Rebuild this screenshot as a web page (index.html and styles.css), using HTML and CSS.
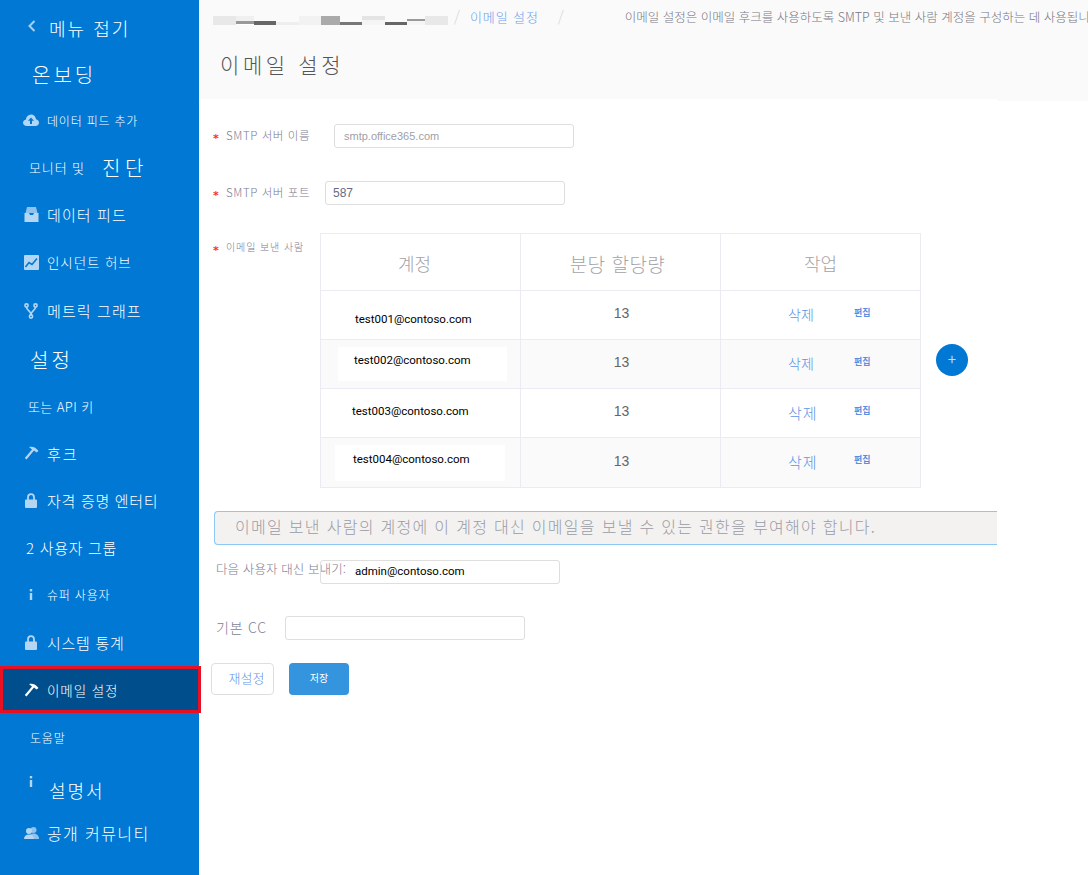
FILE: index.html
```html
<!DOCTYPE html>
<html lang="ko">
<head>
	<meta charset="UTF-8">
	<title>이메일 설정</title>
	<link rel="stylesheet" href="styles.css">
</head>
<body>
	<div class="page">
		<div class="side">
			<div class="item h46 fold">
				<svg class="chev" width="8" height="12" viewBox="0 0 8 12"><path d="M6.5 1 L1.5 6 L6.5 11" fill="none" stroke="#a9d0f2" stroke-width="2"/></svg>
				<span class="fs18">메뉴 접기</span>
			</div>
			<div class="item h46 pl32"><span class="fs20">온보딩</span></div>
			<div class="item h46">
				<span class="ic"><svg width="16" height="12" viewBox="0 0 16 12"><path d="M4 12 C1.5 12 0 10.6 0 8.8 C0 7.2 1.2 6 2.8 5.8 C3.2 2.6 5.4 0.5 8 0.5 C10.6 0.5 12.6 2.4 13 5.2 C14.8 5.5 16 6.9 16 8.7 C16 10.6 14.5 12 12.5 12 Z" fill="#b5d6f3"/><path d="M8 3.5 L11 6.8 H9 V10 H7 V6.8 H5 Z" fill="#0078d4"/></svg></span>
				<span class="fs12">데이터 피드 추가</span>
			</div>
			<div class="item h48 pl29"><span class="fs13 gap-r">모니터 및</span><span class="fs20 wide">진단</span></div>
			<div class="item h47">
				<span class="ic"><svg width="15" height="15" viewBox="0 0 15 15"><path d="M3 0 H12 L13.5 6 H1.5 Z" fill="#8fc2ee"/><path d="M0.5 6 H5 L6 8 H9 L10 6 H14.5 V15 H0.5 Z" fill="#b5d6f3"/></svg></span>
				<span class="fs15">데이터 피드</span>
			</div>
			<div class="item h48">
				<span class="ic"><svg width="15" height="15" viewBox="0 0 15 15"><rect width="15" height="15" rx="1" fill="#b5d6f3"/><path d="M1.5 12 L5 7.5 L8 9.5 L13 3.5" fill="none" stroke="#0078d4" stroke-width="1.6"/></svg></span>
				<span class="fs14">인시던트 허브</span>
			</div>
			<div class="item h49">
				<span class="ic"><svg width="14" height="16" viewBox="0 0 14 16"><g fill="none" stroke="#b5d6f3" stroke-width="1.6"><circle cx="2.5" cy="2.5" r="1.6"/><circle cx="11.5" cy="2.5" r="1.6"/><circle cx="7" cy="13.5" r="1.6"/><path d="M2.5 4 C2.5 8 7 7.5 7 12 M11.5 4 C11.5 8 7 7.5 7 12"/></g></svg></span>
				<span class="fs15">메트릭 그래프</span>
			</div>
			<div class="item h48 pl30"><span class="fs20">설정</span></div>
			<div class="item h46 pl28"><span class="fs13 tight">또는 API 키</span></div>
			<div class="item h48">
				<span class="ic"><svg width="15" height="14" viewBox="0 0 15 14"><path d="M5 1 C8 0 12 1 14.5 5 L12.5 6.5 L10 4.5 L2.5 13.5 L0.8 12 L8 3.5 C7 2.5 6 2 5 1 Z" fill="#b5d6f3"/></svg></span>
				<span class="fs15 short">후크</span>
			</div>
			<div class="item h47">
				<span class="ic"><svg width="12" height="15" viewBox="0 0 12 15"><path d="M3 7 V4.5 C3 2.5 4.3 1.2 6 1.2 C7.7 1.2 9 2.5 9 4.5 V7" fill="none" stroke="#b5d6f3" stroke-width="1.8"/><rect y="6.5" width="12" height="8.5" rx="1" fill="#b5d6f3"/></svg></span>
				<span class="fs15 snug">자격 증명 엔터티</span>
			</div>
			<div class="item h47 pl26"><span class="fs15 snug">2 사용자 그룹</span></div>
			<div class="item h47">
				<span class="ic"><svg width="4" height="11" viewBox="0 0 4 11"><rect x="0.8" width="2.4" height="2.4" fill="#b5d6f3"/><rect x="0.8" y="4" width="2.4" height="7" fill="#b5d6f3"/></svg></span>
				<span class="fs12">슈퍼 사용자</span>
			</div>
			<div class="item h48">
				<span class="ic"><svg width="12" height="15" viewBox="0 0 12 15"><path d="M3 7 V4.5 C3 2.5 4.3 1.2 6 1.2 C7.7 1.2 9 2.5 9 4.5 V7" fill="none" stroke="#b5d6f3" stroke-width="1.8"/><rect y="6.5" width="12" height="8.5" rx="1" fill="#b5d6f3"/></svg></span>
				<span class="fs15 snug">시스템 통계</span>
			</div>
			<div class="item h47 active">
				<span class="ic"><svg width="15" height="14" viewBox="0 0 15 14"><path d="M5 1 C8 0 12 1 14.5 5 L12.5 6.5 L10 4.5 L2.5 13.5 L0.8 12 L8 3.5 C7 2.5 6 2 5 1 Z" fill="#fff"/></svg></span>
				<span class="fs14">이메일 설정</span>
			</div>
			<div class="item h49 pl30"><span class="fs12">도움말</span></div>
			<div class="item h49">
				<span class="ic"><svg class="up" width="4" height="11" viewBox="0 0 4 11"><rect x="0.8" width="2.4" height="2.4" fill="#b5d6f3"/><rect x="0.8" y="4" width="2.4" height="7" fill="#b5d6f3"/></svg></span>
				<span class="fs18 doc">설명서</span>
			</div>
			<div class="item h44">
				<span class="ic"><svg width="15" height="12" viewBox="0 0 15 12"><circle cx="9.5" cy="3" r="3" fill="#8fc2ee"/><path d="M5 12 C5 8 7 6.5 9.5 6.5 C12 6.5 15 8 15 12 Z" fill="#8fc2ee"/><circle cx="5" cy="4" r="3" fill="#b5d6f3"/><path d="M0 12 C0 9 2 7.5 5 7.5 C8 7.5 10 9 10 12 Z" fill="#b5d6f3"/></svg></span>
				<span class="fs16">공개 커뮤니티</span>
			</div>
		</div>

		<div class="main">
			<div class="head">
				<div class="crumbs">
					<div class="blur">
						<i class="b1"></i><i class="b2"></i><i class="b3"></i><i class="b4"></i><i class="b5"></i><i class="b6"></i><i class="b7"></i><i class="b8"></i><i class="b9"></i><i class="b10"></i><i class="b11"></i>
					</div>
					<span class="slash">/</span>
					<span class="crumb-link">이메일 설정</span>
					<span class="slash slash2">/</span>
					<span class="crumb-desc">이메일 설정은 이메일 후크를 사용하도록 SMTP 및 보낸 사람 계정을 구성하는 데 사용됩니다.</span>
				</div>
				<div class="title">이메일 설정</div>
			</div>
			<div class="notch"></div>

			<div class="form">
				<div class="row">
					<span class="star">*</span>
					<label class="lab">SMTP 서버 이름</label>
					<div class="inp host">smtp.office365.com</div>
				</div>
				<div class="row row-port">
					<span class="star">*</span>
					<label class="lab lab-port">SMTP 서버 포트</label>
					<div class="inp port">587</div>
				</div>
				<div class="row row-table">
					<span class="star star-t">*</span>
					<label class="lab lab-t">이메일 보낸 사람</label>
					<table class="tbl">
						<tr>
							<th class="th1">계정</th>
							<th class="th2">분당 할당량</th>
							<th>작업</th>
						</tr>
						<tr class="r1">
							<td><span class="mail m1">test001@contoso.com</span></td>
							<td class="num">13</td>
							<td><div class="acts"><a class="del">삭제</a><a class="edit">편집</a></div></td>
						</tr>
						<tr class="r2">
							<td><span class="mail m2">test002@contoso.com</span></td>
							<td class="num">13</td>
							<td><div class="acts"><a class="del">삭제</a><a class="edit">편집</a></div></td>
						</tr>
						<tr class="r3">
							<td><span class="mail m3">test003@contoso.com</span></td>
							<td class="num">13</td>
							<td><div class="acts"><a class="del">삭제</a><a class="edit">편집</a></div></td>
						</tr>
						<tr class="r4">
							<td><span class="mail m4">test004@contoso.com</span></td>
							<td class="num">13</td>
							<td><div class="acts"><a class="del">삭제</a><a class="edit">편집</a></div></td>
						</tr>
					</table>
					<div class="add">+</div>
				</div>
				<div class="alert">이메일 보낸 사람의 계정에 이 계정 대신 이메일을 보낼 수 있는 권한을 부여해야 합니다.</div>
				<div class="row row-from">
					<label class="lab2 lab-from">다음 사용자 대신 보내기:</label>
					<div class="inp from">admin@contoso.com</div>
				</div>
				<div class="row row-cc">
					<label class="lab2 lab-cc">기본 CC</label>
					<div class="inp"></div>
				</div>
				<div class="btns">
					<button class="btn reset">재설정</button>
					<button class="btn save">저장</button>
				</div>
			</div>
		</div>
	</div>
</body>
</html>
```
FILE: styles.css
```css
* { margin:0;padding:0;box-sizing:border-box; }
html,body { height:875px;overflow:hidden;background:#fff; }
body { font-family:"Noto Sans CJK KR","Noto Sans",sans-serif;font-weight:300; }
.page { display:flex;height:875px; }

/* left menu */
.side { width:199px;flex:none;background:#0078d4;color:#fff;padding-top:5px;position:relative; }
.item { display:flex;align-items:center;padding-left:23px;white-space:nowrap; }
.h44 { height:44px; } .h46 { height:46px; } .h47 { height:47px; } .h48 { height:48px; } .h49 { height:49px; }
.pl26 { padding-left:26px; } .pl28 { padding-left:28px; } .pl29 { padding-left:29px; } .pl30 { padding-left:30px; } .pl32 { padding-left:32px; }
.fs12 { font-size:12px;letter-spacing:.8px; }
.fs13 { font-size:13px;letter-spacing:.9px; }
.fs14 { font-size:13.5px;letter-spacing:.9px; }
.fs15 { font-size:15px;letter-spacing:1.1px; }
.fs16 { font-size:16px;letter-spacing:1.4px; }
.fs18 { font-size:18px;letter-spacing:2px; }
.fs20 { font-size:20px;letter-spacing:3px; }
.tight { letter-spacing:.4px; }
.snug { letter-spacing:.7px; }
.short { letter-spacing:2px; }
.ic { width:16px;margin-right:8px;flex:none;display:flex;justify-content:center; }
.up { margin-bottom:10px; }
.fold { padding-left:28px; }
.chev { margin-right:13px;margin-top:-4px; }
.gap-r { margin-right:17px; }
.wide { letter-spacing:4.5px; }
.doc { margin:6px 0 0 2px; }
.active { background:#004e8c;border:3px solid #e81123;width:201px;padding-left:20px;position:relative; }

/* header */
.main { flex:1;min-width:0; }
.head { height:99px;background:#fafafa;overflow:hidden; }
.notch { width:91px;height:2px;background:#fafafa;margin-left:auto; }
.crumbs { display:flex;align-items:center;height:18px;margin-top:7px;padding-left:14px;white-space:nowrap;font-size:13px; }
.blur { display:flex;height:9px;width:235px;margin-top:9px;flex:none; }
.blur i { display:block;height:9px;flex:none; }
.b1 { width:23px;background:#e8e8e8; }
.b2 { width:18px;background:linear-gradient(#f0f0f0 55%,#999 55%,#999 85%,#fff 85%); }
.b3 { width:22px;background:linear-gradient(#fafafa 55%,#666 55%); }
.b4 { width:23px;background:linear-gradient(#fafafa 70%,#eee 70%); }
.b5 { width:22px;background:#f2f2f2; }
.b6 { width:19px;background:#aaa; }
.b7 { width:22px;background:linear-gradient(#fafafa 65%,#777 65%); }
.b8 { width:23px;background:linear-gradient(#e4e4e4 50%,#f5f5f5 50%); }
.b9 { width:22px;background:linear-gradient(#fafafa 70%,#666 70%); }
.b10 { width:18px;background:linear-gradient(#fafafa 30%,#999 30%,#999 60%,#f5f5f5 60%); }
.b11 { width:23px;background:#e8e8e8; }
.slash { color:#d5d5d8;margin-left:6px;font-size:15px; }
.crumb-link { color:#6a9fee;margin-left:10px;letter-spacing:.9px; }
.slash2 { margin-left:19px; }
.crumb-desc { color:#777782;margin-left:61px;font-size:12.5px; }
.title { font-size:21px;color:#555;padding-left:21px;margin-top:24px;letter-spacing:3.6px;line-height:30px; }

/* form */
.form { padding-top:23px;width:798px; }
.row { display:flex; }
.star { color:#f5370f;font-family:"DejaVu Sans",sans-serif;font-weight:700;font-size:11px;width:13px;margin:6px 0 0 14px;line-height:18px;flex:none; }
.lab { color:#7d7d92;font-size:11.5px;letter-spacing:.6px;line-height:22px;width:108px;flex:none;white-space:nowrap; }
.lab-port { width:99px; }
.inp { width:240px;height:24px;border:1px solid #dedede;border-radius:3px;background:transparent;font-size:12px;line-height:22px;padding-left:9px;flex:none; }
.host { color:#a0a0a8;font-size:11px;font-family:"Liberation Sans",sans-serif; }
.port { color:#666c80;padding-left:7px;font-size:12px;font-family:"Liberation Sans",sans-serif; }
.row-port { margin-top:33px; }
.row-table { margin-top:28px;position:relative; }
.star-t { margin-top:9px; }
.lab-t { width:94px;font-size:10px;letter-spacing:.9px;line-height:28px; }
.lab2 { color:#7d7d92;font-size:12.5px;line-height:18px;white-space:nowrap;flex:none; }
.lab-from { width:104px;margin-left:17px;letter-spacing:.1px; }
.lab-cc { width:69px;margin-left:17px;font-size:14px;line-height:20px;padding-top:1px;letter-spacing:.8px; }

/* table */
.tbl { border-collapse:collapse;table-layout:fixed;width:601px;flex:none; }
.tbl th,.tbl td { border:1px solid #ebebf3;width:200px; }
.tbl th { height:57px;font-size:18px;font-weight:300;color:#a3a3a8;padding-top:2px; }
.th1 { padding-right:12px; }
.tbl .th2 { font-size:19px;letter-spacing:.5px;padding-right:6px; }
.tbl td { height:49px;text-align:center;font-size:14px;color:#666; }
.r2 td,.r4 td { background:#fafafa; }
.tbl .r4 td { height:50px; }
.tbl .num { padding:0 0 4px 2px;font-family:"Liberation Sans",sans-serif;font-weight:400; }
.tbl td:first-child { text-align:left; }
.mail { display:block;font-family:Roboto,sans-serif;font-weight:400;font-size:11.5px;color:#000;white-space:nowrap; }
.m1 { padding:8px 0 0 34px; }
.m2 { background:#fff;width:169px;height:34px;margin-left:17px;padding:6px 0 0 16px; }
.m3 { padding:0 0 4px 31px; }
.m4 { background:#fff;width:170px;height:36px;margin-left:14px;padding:7px 0 0 18px; }
.acts { display:flex;padding:0 0 2px 67px;align-items:center; }
.del { color:#5f94e8;font-size:14px;width:66px;text-align:left; }
.r3 .del,.r4 .del { font-size:15px;letter-spacing:1px; }
.edit { color:#5a8fe0;font-size:9px;font-weight:700;margin-top:-4px; }
.add { position:absolute;left:737px;top:111px;width:32px;height:32px;border-radius:50%;background:#0078d4;color:#b9dcf7;text-align:center;font-size:15px;font-weight:400;line-height:30px; }

/* bottom part */
.alert { margin:23px 0 0 15px;height:34px;background:#f3f2f1;border:1px solid #8cc8f5;border-right:none;border-radius:4px 0 0 4px;color:#9a9ca6;font-size:16px;line-height:29px;padding-left:20px;white-space:nowrap;letter-spacing:1.3px;overflow:hidden; }
.row-from { margin-top:15px; }
.from { font-family:Roboto,sans-serif;font-weight:400;font-size:11.5px;color:#000;padding-left:34px;line-height:20px; }
.row-cc { margin-top:32px; }
.btns { display:flex;margin-top:23px;padding-left:12px; }
.btn { height:32px;border-radius:4px;font-family:inherit;font-weight:300; }
.reset { width:63px;background:#fff;border:1px solid #dedede;color:#5f94e8;font-size:13px;padding-left:8px;padding-bottom:4px; }
.save { width:60px;margin-left:15px;background:#3594de;border:none;color:#fff;font-size:10px;font-weight:400;padding-bottom:4px; }
```
